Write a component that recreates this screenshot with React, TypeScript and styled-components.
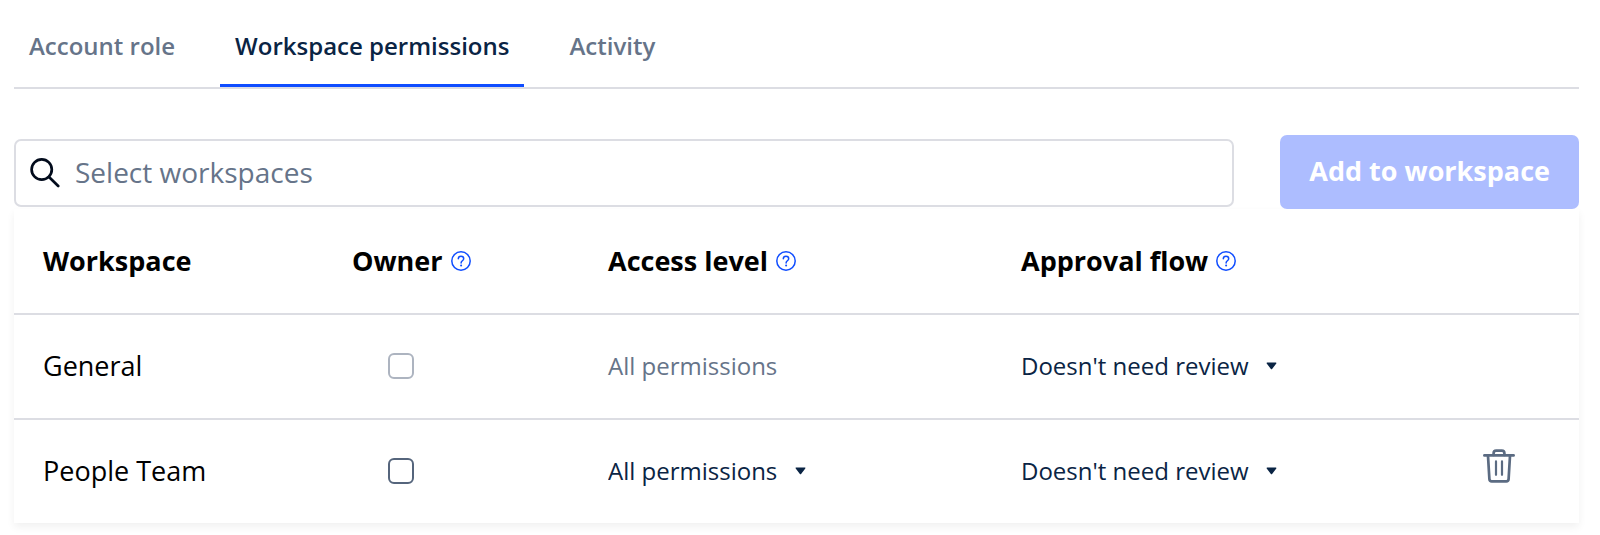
import React, { useState } from "react";
import styled, { createGlobalStyle } from "styled-components";

const color = {
  ink: "#0a2444",
  muted: "#667489",
  line: "#dcdde3",
  accent: "#0f4dff",
  accentSoft: "#adbdff",
};

const GlobalStyle = createGlobalStyle`
  *, *::before, *::after { box-sizing: border-box; }
  body {
    margin: 0;
    background: #fff;
    color: #000;
    font-family: "Open Sans", "Noto Sans", sans-serif;
  }
  button, input, select { font: inherit; color: inherit; }
`;

const Page = styled.main`
  padding: 0 21px 12px 14px;
`;

const TabBar = styled.div`
  display: flex;
  gap: 30px;
  border-bottom: 2px solid ${color.line};
`;

const Tab = styled.button<{ $active: boolean }>`
  padding: 30px 15px 22px;
  border: 0;
  border-bottom: 3px solid ${(p) => (p.$active ? color.accent : "transparent")};
  background: none;
  color: ${(p) => (p.$active ? color.ink : color.muted)};
  font-size: 24px;
  font-weight: 600;
  line-height: 32px;
  white-space: nowrap;
  cursor: pointer;
`;

const AddRow = styled.form`
  display: flex;
  align-items: flex-end;
  gap: 46px;
  margin-top: 46px;
`;

const SearchBox = styled.label`
  flex: 1;
  display: flex;
  align-items: center;
  gap: 15px;
  min-width: 0;
  height: 68px;
  margin-bottom: 2px;
  padding: 0 14px;
  border: 2px solid ${color.line};
  border-radius: 7px;
`;

const SearchInput = styled.input`
  flex: 1;
  min-width: 0;
  padding: 0 0 3px;
  border: 0;
  outline: 0;
  background: none;
  font-size: 28px;
  line-height: 36px;

  &::placeholder {
    color: ${color.muted};
    opacity: 1;
  }
`;

const AddButton = styled.button`
  padding: 18px 29px 20px;
  border: 0;
  border-radius: 7px;
  background: ${color.accentSoft};
  color: #fff;
  font-size: 27px;
  font-weight: 700;
  line-height: 36px;
  white-space: nowrap;
`;

const Table = styled.table`
  width: 100%;
  table-layout: fixed;
  border-collapse: separate;
  border-spacing: 0;
  box-shadow: 0 4px 8px rgba(0, 0, 0, 0.06);
`;

const Column = styled.col<{ $width?: number }>`
  width: ${(p) => (p.$width ? `${p.$width}px` : "auto")};
`;

const HeadCell = styled.th`
  height: 106px;
  padding: 0 0 0 29px;
  border-bottom: 2px solid ${color.line};
  text-align: left;
  font-size: 27px;
  font-weight: 700;
  line-height: 36px;
  white-space: nowrap;
`;

const HeadLabel = styled.span`
  display: flex;
  align-items: center;
  gap: 8px;
`;

const HelpButton = styled.button`
  display: flex;
  padding: 0;
  border: 0;
  background: none;
  color: ${color.accent};
  cursor: pointer;
`;

const Row = styled.tr`
  & > * {
    height: 105px;
    padding: 0 0 1px 29px;
    border-bottom: 2px solid ${color.line};
    text-align: left;
    white-space: nowrap;
  }
  &:last-child > * {
    height: 103px;
    border-bottom: 0;
  }
`;

const NameCell = styled.th`
  font-size: 27px;
  font-weight: 400;
  line-height: 36px;
`;

const Cell = styled.td`
  font-size: 24px;
  line-height: 32px;
`;

const Checkbox = styled.input`
  display: block;
  appearance: none;
  width: 26px;
  height: 26px;
  margin: 0 0 0 36px;
  border: 2px solid #55657c;
  border-radius: 6px;
  background: #fff;

  &:checked { background: ${color.accent}; }
  &:disabled { border-color: #adb4c0; }
`;

const Muted = styled.span`
  color: ${color.muted};
`;

const SelectBox = styled.span`
  display: grid;
  width: max-content;
  align-items: center;
  color: ${color.ink};

  & > * { grid-area: 1 / 1; }
  & > svg {
    justify-self: end;
    pointer-events: none;
  }
`;

const Select = styled.select`
  appearance: none;
  padding: 0 28px 0 0;
  border: 0;
  background: none;
  line-height: 32px;
  cursor: pointer;
`;

const DeleteButton = styled.button`
  display: block;
  padding: 0 0 10px;
  border: 0;
  background: none;
  color: #5b6b82;
  cursor: pointer;

  & > svg { display: block; }
`;

const SearchIcon = () => (
  <svg width="30" height="30" viewBox="0 0 30 30" fill="none" stroke="#020b1c" strokeWidth="2.7" strokeLinecap="round" aria-hidden="true">
    <circle cx="11.7" cy="11.5" r="10.1" />
    <path d="M19 19l9.2 9" />
  </svg>
);

const HelpIcon = () => (
  <svg width="20" height="20" viewBox="0 0 20 20" fill="none" stroke="currentColor" strokeLinecap="round" aria-hidden="true">
    <circle cx="10" cy="10" r="9.2" strokeWidth="1.5" />
    <path d="M7.3 7.8C7.3 6.2 8.4 5.2 10 5.2s2.7 1 2.7 2.5c0 2-2.6 2.2-2.6 4.2" strokeWidth="1.5" />
    <circle cx="10.1" cy="14.6" r="1" fill="currentColor" stroke="none" />
  </svg>
);

const CaretIcon = () => (
  <svg width="11" height="8" viewBox="0 0 11 8" aria-hidden="true">
    <path d="M1.2.5h8.6c.6 0 .8.5.5.9L6.1 7a.8.8 0 0 1-1.2 0L.7 1.4C.4 1 .6.5 1.2.5z" fill="currentColor" />
  </svg>
);

const TrashIcon = () => (
  <svg width="32" height="34" viewBox="0 0 32 34" fill="none" stroke="currentColor" strokeWidth="2.7" strokeLinecap="round" strokeLinejoin="round" aria-hidden="true">
    <path d="M1.4 6.4h29.2" />
    <path d="M10.6 6V4.2c0-1.6 1-2.6 2.6-2.6h5.6c1.6 0 2.6 1 2.6 2.6V6" />
    <path d="M5 6.8l1.4 23.4c.1 1.4 1 2.2 2.3 2.2h14.6c1.3 0 2.2-.8 2.3-2.2L27 6.8" />
    <path d="M13 12.4v13.4M19 12.4v13.4" strokeWidth="2.2" />
  </svg>
);

const tabs = ["Account role", "Workspace permissions", "Activity"];

const headings = [
  { label: "Workspace", help: false },
  { label: "Owner", help: true },
  { label: "Access level", help: true },
  { label: "Approval flow", help: true },
];

const workspaces = [
  { name: "General", locked: true },
  { name: "People Team", locked: false },
];

function Dropdown({ label, value }: { label: string; value: string }) {
  return (
    <SelectBox>
      <Select aria-label={label} defaultValue={value}>
        <option>{value}</option>
      </Select>
      <CaretIcon />
    </SelectBox>
  );
}

export default function App() {
  const [active, setActive] = useState(tabs[1]);

  return (
    <>
      <GlobalStyle />
      <Page>
        <TabBar role="tablist">
          {tabs.map((tab) => (
            <Tab key={tab} type="button" role="tab" aria-selected={tab === active} $active={tab === active} onClick={() => setActive(tab)}>
              {tab}
            </Tab>
          ))}
        </TabBar>

        <AddRow onSubmit={(e) => e.preventDefault()}>
          <SearchBox>
            <SearchIcon />
            <SearchInput type="text" aria-label="Select workspaces" placeholder="Select workspaces" />
          </SearchBox>
          <AddButton type="submit" disabled>Add to workspace</AddButton>
        </AddRow>

        <Table>
          <colgroup>
            <Column $width={309} />
            <Column $width={256} />
            <Column $width={413} />
            <Column />
            <Column $width={125} />
          </colgroup>
          <thead>
            <tr>
              {headings.map(({ label, help }) => (
                <HeadCell key={label} scope="col">
                  <HeadLabel>
                    {label}
                    {help && (
                      <HelpButton type="button" aria-label={`About ${label}`}>
                        <HelpIcon />
                      </HelpButton>
                    )}
                  </HeadLabel>
                </HeadCell>
              ))}
              <HeadCell as="td" />
            </tr>
          </thead>
          <tbody>
            {workspaces.map(({ name, locked }) => (
              <Row key={name}>
                <NameCell scope="row">{name}</NameCell>
                <Cell>
                  <Checkbox type="checkbox" aria-label={`Owner of ${name}`} disabled={locked} />
                </Cell>
                <Cell>
                  {locked ? <Muted>All permissions</Muted> : <Dropdown label={`Access level for ${name}`} value="All permissions" />}
                </Cell>
                <Cell>
                  <Dropdown label={`Approval flow for ${name}`} value="Doesn't need review" />
                </Cell>
                <Cell>
                  {!locked && (
                    <DeleteButton type="button" aria-label={`Remove ${name}`}>
                      <TrashIcon />
                    </DeleteButton>
                  )}
                </Cell>
              </Row>
            ))}
          </tbody>
        </Table>
      </Page>
    </>
  );
}
